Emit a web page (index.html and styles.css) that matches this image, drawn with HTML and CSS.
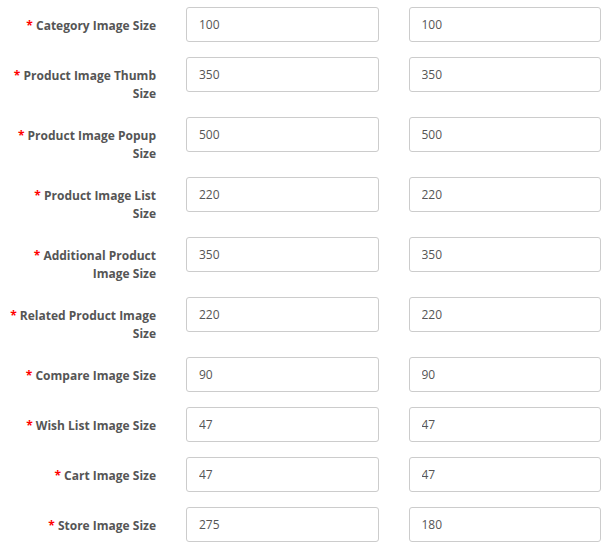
FILE: index.html
```html
<!DOCTYPE html>
<html>
<head>
<meta charset="utf-8">
<link rel="stylesheet" href="styles.css">
</head>
<body>
<form class="form">
  <div class="form-group">
    <label class="control-label"><span class="req">*</span> Category Image Size</label>
    <div class="col"><input class="form-control" type="text" value="100"></div>
    <div class="col"><input class="form-control" type="text" value="100"></div>
  </div>
  <div class="form-group">
    <label class="control-label"><span class="req">*</span> Product Image Thumb Size</label>
    <div class="col"><input class="form-control" type="text" value="350"></div>
    <div class="col"><input class="form-control" type="text" value="350"></div>
  </div>
  <div class="form-group">
    <label class="control-label"><span class="req">*</span> Product Image Popup Size</label>
    <div class="col"><input class="form-control" type="text" value="500"></div>
    <div class="col"><input class="form-control" type="text" value="500"></div>
  </div>
  <div class="form-group">
    <label class="control-label"><span class="req">*</span> Product Image List Size</label>
    <div class="col"><input class="form-control" type="text" value="220"></div>
    <div class="col"><input class="form-control" type="text" value="220"></div>
  </div>
  <div class="form-group">
    <label class="control-label"><span class="req">*</span> Additional Product Image Size</label>
    <div class="col"><input class="form-control" type="text" value="350"></div>
    <div class="col"><input class="form-control" type="text" value="350"></div>
  </div>
  <div class="form-group">
    <label class="control-label"><span class="req">*</span> Related Product Image Size</label>
    <div class="col"><input class="form-control" type="text" value="220"></div>
    <div class="col"><input class="form-control" type="text" value="220"></div>
  </div>
  <div class="form-group">
    <label class="control-label"><span class="req">*</span> Compare Image Size</label>
    <div class="col"><input class="form-control" type="text" value="90"></div>
    <div class="col"><input class="form-control" type="text" value="90"></div>
  </div>
  <div class="form-group">
    <label class="control-label"><span class="req">*</span> Wish List Image Size</label>
    <div class="col"><input class="form-control" type="text" value="47"></div>
    <div class="col"><input class="form-control" type="text" value="47"></div>
  </div>
  <div class="form-group">
    <label class="control-label"><span class="req">*</span> Cart Image Size</label>
    <div class="col"><input class="form-control" type="text" value="47"></div>
    <div class="col"><input class="form-control" type="text" value="47"></div>
  </div>
  <div class="form-group">
    <label class="control-label"><span class="req">*</span> Store Image Size</label>
    <div class="col"><input class="form-control" type="text" value="275"></div>
    <div class="col"><input class="form-control" type="text" value="180"></div>
  </div>
</form>
</body>
</html>
```
FILE: styles.css
```css
html, body {
  margin: 0;
  padding: 0;
  background: #fff;
}
body {
  font-family: "Open Sans", "DejaVu Sans", sans-serif;
  font-size: 12px;
  color: #555;
}
.form {
  padding-top: 7px;
  width: 616px;
}
.form-group {
  display: flex;
  align-items: flex-start;
  margin-bottom: 15px;
}
.control-label {
  flex: 0 0 171px;
  box-sizing: border-box;
  padding: 10px 15px 0 9px;
  margin-bottom: -1px;
  text-align: right;
  font-weight: bold;
  line-height: 18px;
  color: #555;
}
.req {
  color: #f00;
  font-weight: bold;
}
.col {
  flex: 1 1 0;
  padding: 0 15px;
  min-width: 0;
}
.form-control {
  display: block;
  box-sizing: border-box;
  width: 100%;
  height: 35px;
  margin: 0;
  padding: 6px 12px;
  border: 1px solid #ccc;
  border-radius: 3px;
  background: #fff;
  font-family: "Open Sans", "DejaVu Sans", sans-serif;
  font-size: 12px;
  color: #555;
  outline: none;
}
```
